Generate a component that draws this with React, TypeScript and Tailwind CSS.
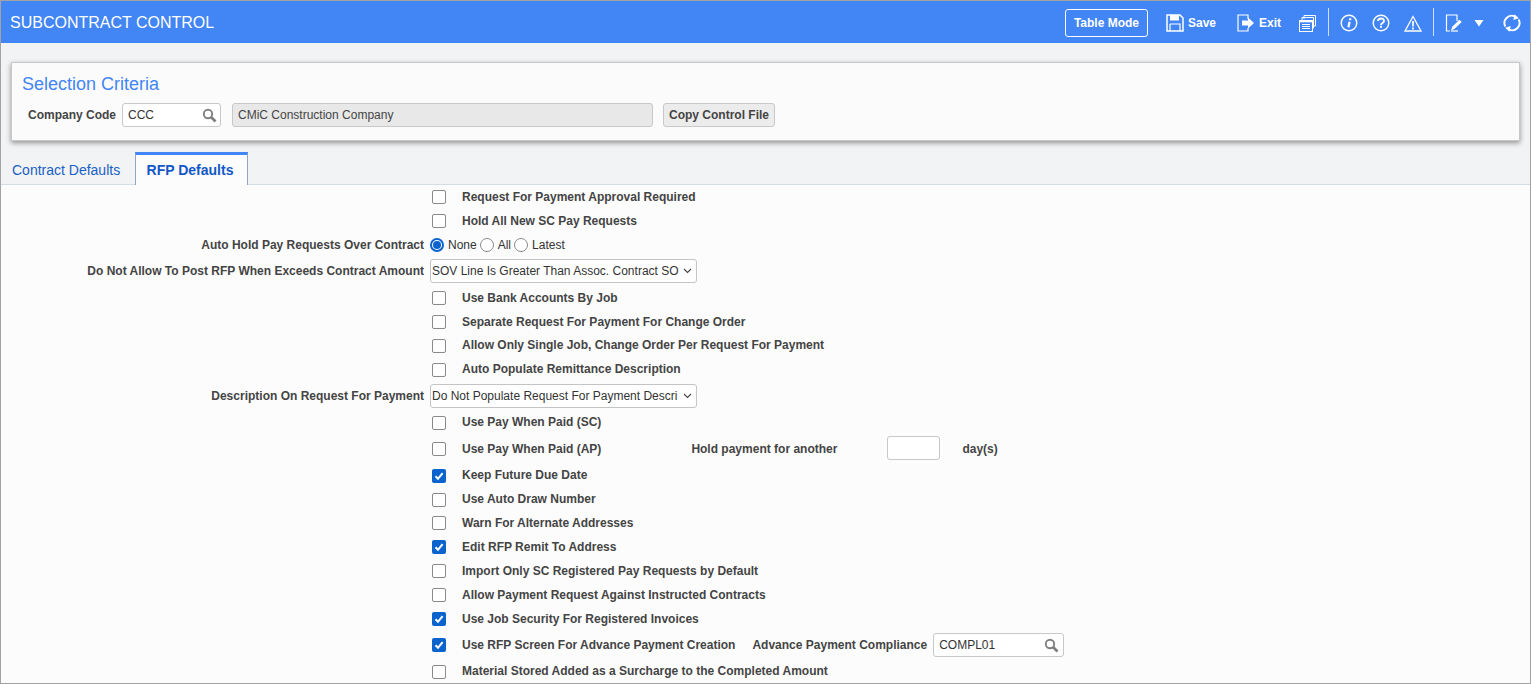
import React from "react";

const Chk = ({ on }: { on?: boolean }) =>
  on ? (
    <span className="flex h-[14px] w-[14px] items-center justify-center rounded-[2px] bg-[#0b63ce]">
      <svg width="12" height="12" viewBox="0 0 12 12" fill="none" stroke="#fff" strokeWidth="2">
        <path d="M2.5 6.2 5 8.8 9.6 3.2" />
      </svg>
    </span>
  ) : (
    <span className="block h-[14px] w-[14px] rounded-[2px] border border-[#8a8a8a] bg-white" />
  );

const Radio = ({ on }: { on?: boolean }) =>
  on ? (
    <span className="flex h-[14px] w-[14px] items-center justify-center rounded-full border-2 border-[#0b63ce] bg-white">
      <span className="block h-[8px] w-[8px] rounded-full bg-[#0b63ce]" />
    </span>
  ) : (
    <span className="block h-[14px] w-[14px] rounded-full border border-[#8a8a8a] bg-white" />
  );

const Search = () => (
  <svg width="15" height="15" viewBox="0 0 15 15" fill="none" stroke="#808080">
    <circle cx="6" cy="6" r="4.2" strokeWidth="1.9" />
    <path d="M9.2 9.2 13.5 13.5" strokeWidth="2.8" />
  </svg>
);

const Row = ({
  h = "h-6",
  label,
  children,
}: {
  h?: string;
  label?: string;
  children: React.ReactNode;
}) => (
  <div className={`flex items-center ${h}`}>
    <div className="w-[423px] shrink-0 text-right">{label}</div>
    {children}
  </div>
);

const CheckRow = ({
  on,
  low,
  text,
  h,
  children,
}: {
  on?: boolean;
  low?: boolean;
  text: string;
  h?: string;
  children?: React.ReactNode;
}) => (
  <Row h={h}>
    <span className={`ml-[8px] w-[30px] shrink-0 ${low ? "mt-[2px]" : "mt-0"}`}>
      <Chk on={on} />
    </span>
    <span>{text}</span>
    {children}
  </Row>
);

const Select = ({ text }: { text: string }) => (
  <div className="ml-[6px] flex h-[24px] w-[267px] items-center justify-between rounded-[3px] border border-[#c4c4c4] bg-white pl-[1px] pr-[4px] font-normal text-[#333]">
    <span className="whitespace-nowrap">{text}</span>
    <svg width="9" height="6" viewBox="0 0 9 6" fill="none" stroke="#444" strokeWidth="1.1">
      <path d="M1 1 4.5 4.5 8 1" />
    </svg>
  </div>
);

const Divider = () => <span className="block h-[28px] w-px bg-[#cfdffb]" />;

export default function App() {
  return (
    <div className="h-[684px] w-[1531px] overflow-hidden border border-[#a3a3a3] bg-[#f1f3f5] font-['Liberation_Sans',Arial,sans-serif] text-[12px] font-bold text-[#444]">
      <header className="flex h-[42px] items-center bg-[#4285f4] pt-[2px] text-white">
        <div className="ml-[9px] flex-1 text-[16px] font-normal">SUBCONTRACT CONTROL</div>
        <div className="flex h-[28px] w-[83px] items-center justify-center rounded-[3px] border border-white">Table Mode</div>
        <svg className="ml-[18px]" width="18" height="18" viewBox="0 0 18 18" fill="none" stroke="#fff" strokeWidth="1.5">
          <path d="M1 1h13l3 3v13H1z" />
          <path d="M4 1v5.500h9V1z" fill="#fff" stroke="none" />
          <path d="M4 10h10v7M4 10v7" strokeWidth="1.200" />
        </svg>
        <span className="ml-[4px]">Save</span>
        <svg className="ml-[21px]" width="18" height="18" viewBox="0 0 18 18" fill="none" stroke="#fff" strokeWidth="1.200">
          <path d="M11 5V1H1v16h10v-3" />
          <path d="M5 6.500h6V3.500L17 9l-6 5.500v-3H5z" fill="#fff" stroke="none" />
        </svg>
        <span className="ml-[4px]">Exit</span>
        <svg className="ml-[18px]" width="17" height="17" viewBox="0 0 17 17" fill="none" stroke="#fff" strokeWidth="1">
          <path d="M5 4V.5h11.500V11H14" />
          <path d="M3 5.500V2.500h11.500V13H13" />
          <rect x=".5" y="5.500" width="13" height="11" fill="#4285f4" />
          <path d="M.5 6.200h13" strokeWidth="2.200" />
          <path d="M3 9.500h8M3 11.500h8M3 13.500h8" />
        </svg>
        <span className="ml-[12px] -mt-[2px]"><Divider /></span>
        <svg className="ml-[11px]" width="18" height="18" viewBox="0 0 18 18" fill="none" stroke="#fff">
          <circle cx="9" cy="9" r="7.800" strokeWidth="1.400" />
          <path d="M10.200 4.200v2M9.600 7.800 8.400 13.200" strokeWidth="2.200" />
        </svg>
        <svg className="ml-[14px]" width="18" height="18" viewBox="0 0 18 18" fill="none" stroke="#fff">
          <circle cx="9" cy="9" r="7.800" strokeWidth="1.400" />
          <path d="M6 7c.2-3.400 6-3.400 6-.1 0 2-3 2.100-3 4M9 11.800v2" strokeWidth="1.900" />
        </svg>
        <svg className="ml-[14px]" width="18" height="17" viewBox="0 0 18 17" fill="none" stroke="#fff">
          <path d="M9 1.500 17 16H1z" strokeWidth="1.300" />
          <path d="M9 6v5.500M9 12.500v2" strokeWidth="1.700" />
        </svg>
        <span className="ml-[11px] -mt-[2px]"><Divider /></span>
        <svg className="ml-[11px]" width="18" height="18" viewBox="0 0 18 18" fill="none" stroke="#fff" strokeWidth="1.200">
          <path d="M12 7V1H1.500v16H5" />
          <path d="M6 16.500l1.200-3.700 7.300-7 2.200 2.200-7.300 7z" fill="#fff" stroke="none" />
          <path d="M6 17h7" />
        </svg>
        <svg className="ml-[11px]" width="10" height="7" viewBox="0 0 10 7" fill="#fff">
          <path d="M.5 0h9L5 6.500z" />
        </svg>
        <svg className="ml-[19px] mr-[9px]" width="18" height="18" viewBox="0 0 18 18" fill="none" stroke="#fff" strokeWidth="1.900">
          <path d="M2.400 12.500A7.200 7.200 0 0 1 12 2.600" />
          <path d="M15.600 5.500A7.200 7.200 0 0 1 6 15.400" />
          <path d="M11 .5 16 3.500 11 6.200z" fill="#fff" stroke="none" transform="rotate(12 12 3)" />
          <path d="M7 17.500 2 14.500 7 11.800z" fill="#fff" stroke="none" transform="rotate(12 6 15)" />
        </svg>
      </header>

      <section className="mx-[10px] mt-[19px] h-[79px] border border-[#c8c8c8] bg-[#fbfbfb] pl-[10px] pt-[10px] shadow-[0_2px_5px_rgba(0,0,0,0.4)]">
        <div className="text-[18px] font-normal leading-[22px] text-[#4285f4]">Selection Criteria</div>
        <div className="mt-[8px] flex items-center">
          <span className="ml-[6px]">Company Code</span>
          <div className="ml-[6px] flex h-[24px] w-[99px] items-center justify-between rounded-[3px] border border-[#c8c8c8] bg-white pl-[5px] pr-[3px] font-normal text-[#333]">
            CCC
            <Search />
          </div>
          <div className="ml-[11px] flex h-[24px] w-[421px] items-center rounded-[3px] border border-[#c8c8c8] bg-[#e8e8e8] pl-[5px] font-normal text-[#444]">
            CMiC Construction Company
          </div>
          <div className="ml-[10px] flex h-[24px] w-[112px] items-center justify-center rounded-[3px] border border-[#c8c8c8] bg-[#ececec]">
            Copy Control File
          </div>
        </div>
      </section>

      <nav className="mt-[11px] flex h-[33px] items-end border-b border-[#d5dbe3] text-[14px]">
        <div className="flex h-[32px] w-[134px] items-center pl-[11px] pt-[4px] font-normal text-[#1a5fc4]">Contract Defaults</div>
        <div className="relative top-px flex h-[33px] w-[113px] items-center justify-center border-x border-t-[3px] border-x-[#8fa5c4] border-t-[#4285f4] bg-[#fcfcfc] pr-[3px] font-bold text-[#1257c7]">
          RFP Defaults
        </div>
      </nav>

      <main className="h-[499px] bg-[#fcfcfc]">
        <CheckRow text="Request For Payment Approval Required" />
        <CheckRow text="Hold All New SC Pay Requests" />
        <Row label="Auto Hold Pay Requests Over Contract">
          <span className="ml-[6px] flex items-center font-normal text-[#333]">
            <Radio on />
            <span className="ml-[4px]">None</span>
            <span className="ml-[3px]"><Radio /></span>
            <span className="ml-[4px]">All</span>
            <span className="ml-[3px]"><Radio /></span>
            <span className="ml-[4px]">Latest</span>
          </span>
        </Row>
        <Row h="h-[28px] mb-px" label="Do Not Allow To Post RFP When Exceeds Contract Amount">
          <Select text="SOV Line Is Greater Than Assoc. Contract SO" />
        </Row>
        <CheckRow text="Use Bank Accounts By Job" />
        <CheckRow h="h-[23px]" text="Separate Request For Payment For Change Order" />
        <CheckRow low text="Allow Only Single Job, Change Order Per Request For Payment" />
        <CheckRow low text="Auto Populate Remittance Description" />
        <Row h="h-[29px]" label="Description On Request For Payment">
          <Select text="Do Not Populate Request For Payment Descri" />
        </Row>
        <CheckRow low text="Use Pay When Paid (SC)" />
        <CheckRow h="h-[29px]" text="Use Pay When Paid (AP)">
          <span className="ml-[90px]">Hold payment for another</span>
          <span className="-mt-[2px] ml-[50px] block h-[24px] w-[53px] rounded-[3px] border border-[#c8c8c8] bg-white" />
          <span className="ml-[22px]">day(s)</span>
        </CheckRow>
        <CheckRow low on text="Keep Future Due Date" />
        <CheckRow low text="Use Auto Draw Number" />
        <CheckRow text="Warn For Alternate Addresses" />
        <CheckRow on text="Edit RFP Remit To Address" />
        <CheckRow text="Import Only SC Registered Pay Requests by Default" />
        <CheckRow text="Allow Payment Request Against Instructed Contracts" />
        <CheckRow on text="Use Job Security For Registered Invoices" />
        <CheckRow on h="h-[28px]" text="Use RFP Screen For Advance Payment Creation">
          <span className="ml-[17px]">Advance Payment Compliance</span>
          <div className="ml-[6px] flex h-[24px] w-[131px] items-center justify-between rounded-[3px] border border-[#c8c8c8] bg-white pl-[5px] pr-[4px] font-normal text-[#333]">
            COMPL01
            <Search />
          </div>
        </CheckRow>
        <CheckRow low text="Material Stored Added as a Surcharge to the Completed Amount" />
      </main>
    </div>
  );
}
